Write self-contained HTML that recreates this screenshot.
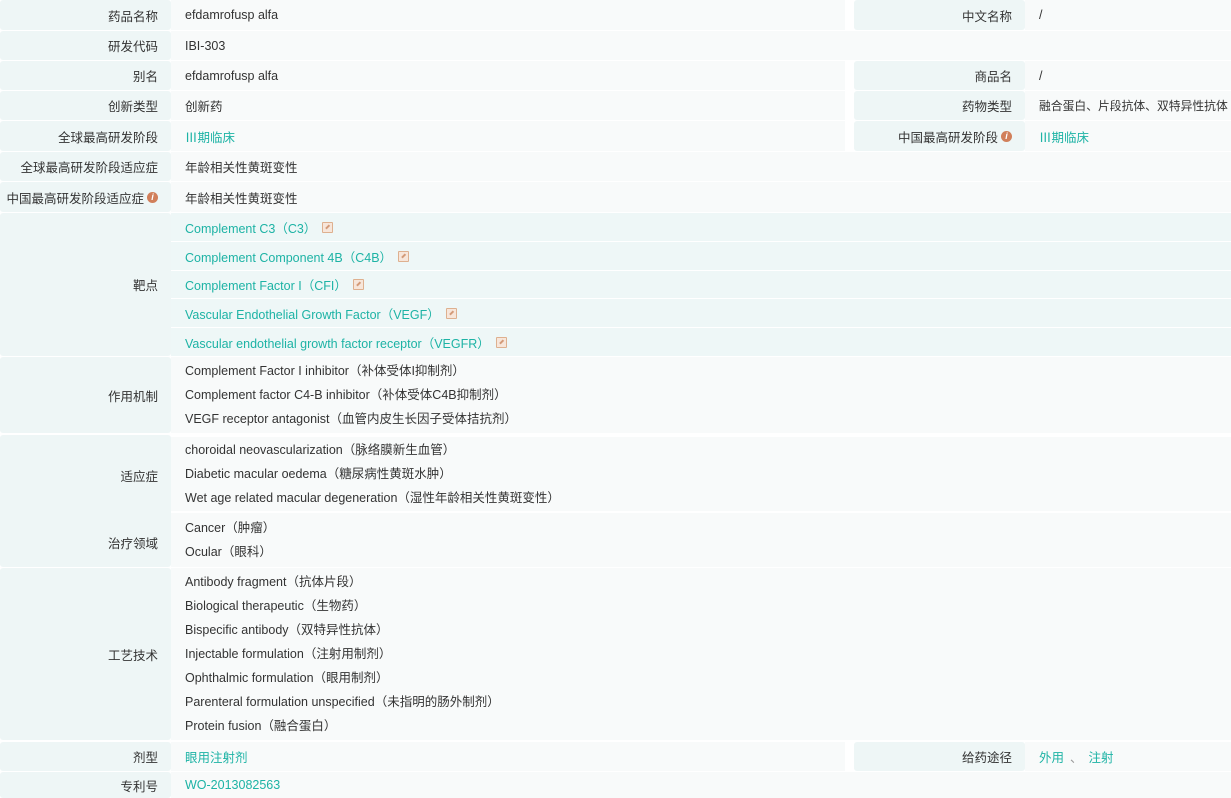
<!DOCTYPE html>
<html><head><meta charset="utf-8"><style>
*{margin:0;padding:0;box-sizing:border-box}
body{width:1231px;height:798px;background:#fff;font-family:"Liberation Sans","Noto Sans CJK SC",sans-serif;font-size:12.5px;color:#333;position:relative;overflow:hidden;white-space:nowrap}
.l{position:absolute;background:#eef6f6;border-radius:3px;text-align:right;padding-right:13px;display:flex;align-items:center;justify-content:flex-end}
.v{position:absolute;background:#f8fafa;padding-left:14px;display:flex;align-items:center;overflow:hidden}
.t{color:#1db3a5}
.tg{background:#eef7f7}
.ml{flex-direction:column;align-items:flex-start;justify-content:center}
.ml div{height:24px;line-height:24px}
.i{display:inline-block;width:11px;height:11px;border-radius:50%;background:#d17f5a;color:#fff;font-size:9px;line-height:11px;text-align:center;font-style:italic;font-weight:bold;margin-left:3px}
.k{display:inline-block;width:11px;height:11px;border:1.5px solid #deb08f;background:#f7e6da;margin-left:6px;position:relative;border-radius:1px}
.k:after{content:"";position:absolute;left:2px;top:3px;width:5px;height:1.5px;background:#d39a78;transform:rotate(-45deg)}
</style></head><body>
<div class="l" style="left:0;top:0;width:171px;height:30px">药品名称</div>
<div class="v" style="left:171px;top:0;width:674px;height:30px">efdamrofusp alfa</div>
<div class="l" style="left:854px;top:0;width:171px;height:30px">中文名称</div>
<div class="v" style="left:1025px;top:0;width:206px;height:30px">/</div>

<div class="l" style="left:0;top:31px;width:171px;height:29px">研发代码</div>
<div class="v" style="left:171px;top:31px;width:1060px;height:29px">IBI-303</div>

<div class="l" style="left:0;top:61px;width:171px;height:29px">别名</div>
<div class="v" style="left:171px;top:61px;width:674px;height:29px">efdamrofusp alfa</div>
<div class="l" style="left:854px;top:61px;width:171px;height:29px">商品名</div>
<div class="v" style="left:1025px;top:61px;width:206px;height:29px">/</div>

<div class="l" style="left:0;top:91px;width:171px;height:29px">创新类型</div>
<div class="v" style="left:171px;top:91px;width:674px;height:29px">创新药</div>
<div class="l" style="left:854px;top:91px;width:171px;height:29px">药物类型</div>
<div class="v" style="left:1025px;top:91px;width:206px;height:29px;font-size:11.8px">融合蛋白、片段抗体、双特异性抗体</div>

<div class="l" style="left:0;top:121px;width:171px;height:30px">全球最高研发阶段</div>
<div class="v t" style="left:171px;top:121px;width:674px;height:30px">Ⅲ期临床</div>
<div class="l" style="left:854px;top:121px;width:171px;height:30px">中国最高研发阶段<span class="i">i</span></div>
<div class="v t" style="left:1025px;top:121px;width:206px;height:30px">Ⅲ期临床</div>

<div class="l" style="left:0;top:152px;width:171px;height:29px">全球最高研发阶段适应症</div>
<div class="v" style="left:171px;top:152px;width:1060px;height:29px">年龄相关性黄斑变性</div>
<div class="l" style="left:0;top:182px;width:171px;height:30px">中国最高研发阶段适应症<span class="i">i</span></div>
<div class="v" style="left:171px;top:182px;width:1060px;height:30px">年龄相关性黄斑变性</div>

<div class="l" style="left:0;top:213px;width:171px;height:143px">靶点</div>
<div class="v tg t" style="left:171px;top:213px;width:1060px;height:28px">Complement C3（C3）<span class="k"></span></div>
<div class="v tg t" style="left:171px;top:242px;width:1060px;height:28px">Complement Component 4B（C4B）<span class="k"></span></div>
<div class="v tg t" style="left:171px;top:271px;width:1060px;height:27px">Complement Factor I（CFI）<span class="k"></span></div>
<div class="v tg t" style="left:171px;top:299px;width:1060px;height:28px">Vascular Endothelial Growth Factor（VEGF）<span class="k"></span></div>
<div class="v tg t" style="left:171px;top:328px;width:1060px;height:28px">Vascular endothelial growth factor receptor（VEGFR）<span class="k"></span></div>

<div class="l" style="left:0;top:357px;width:171px;height:76px">作用机制</div>
<div class="v ml" style="left:171px;top:357px;width:1060px;height:76px"><div>Complement Factor I inhibitor（补体受体I抑制剂）</div><div>Complement factor C4-B inhibitor（补体受体C4B抑制剂）</div><div>VEGF receptor antagonist（血管内皮生长因子受体拮抗剂）</div></div>

<div class="l" style="left:0;top:435px;width:171px;height:132px;display:block"></div>
<div style="position:absolute;left:0;top:466px;width:158px;text-align:right">适应症</div>
<div style="position:absolute;left:0;top:533px;width:158px;text-align:right">治疗领域</div>
<div class="v ml" style="left:171px;top:437px;width:1060px;height:74px"><div>choroidal neovascularization（脉络膜新生血管）</div><div>Diabetic macular oedema（糖尿病性黄斑水肿）</div><div>Wet age related macular degeneration（湿性年龄相关性黄斑变性）</div></div>
<div class="v ml" style="left:171px;top:513px;width:1060px;height:54px"><div>Cancer（肿瘤）</div><div>Ocular（眼科）</div></div>

<div class="l" style="left:0;top:568px;width:171px;height:172px">工艺技术</div>
<div class="v ml" style="left:171px;top:568px;width:1060px;height:172px"><div>Antibody fragment（抗体片段）</div><div>Biological therapeutic（生物药）</div><div>Bispecific antibody（双特异性抗体）</div><div>Injectable formulation（注射用制剂）</div><div>Ophthalmic formulation（眼用制剂）</div><div>Parenteral formulation unspecified（未指明的肠外制剂）</div><div>Protein fusion（融合蛋白）</div></div>

<div class="l" style="left:0;top:742px;width:171px;height:29px">剂型</div>
<div class="v t" style="left:171px;top:742px;width:674px;height:29px">眼用注射剂</div>
<div class="l" style="left:854px;top:742px;width:171px;height:29px">给药途径</div>
<div class="v t" style="left:1025px;top:742px;width:206px;height:29px">外用 <span style="color:#999;margin:0 6px">、</span> 注射</div>

<div class="l" style="left:0;top:772px;width:171px;height:26px">专利号</div>
<div class="v t" style="left:171px;top:772px;width:1060px;height:26px">WO-2013082563</div>
</body></html>
